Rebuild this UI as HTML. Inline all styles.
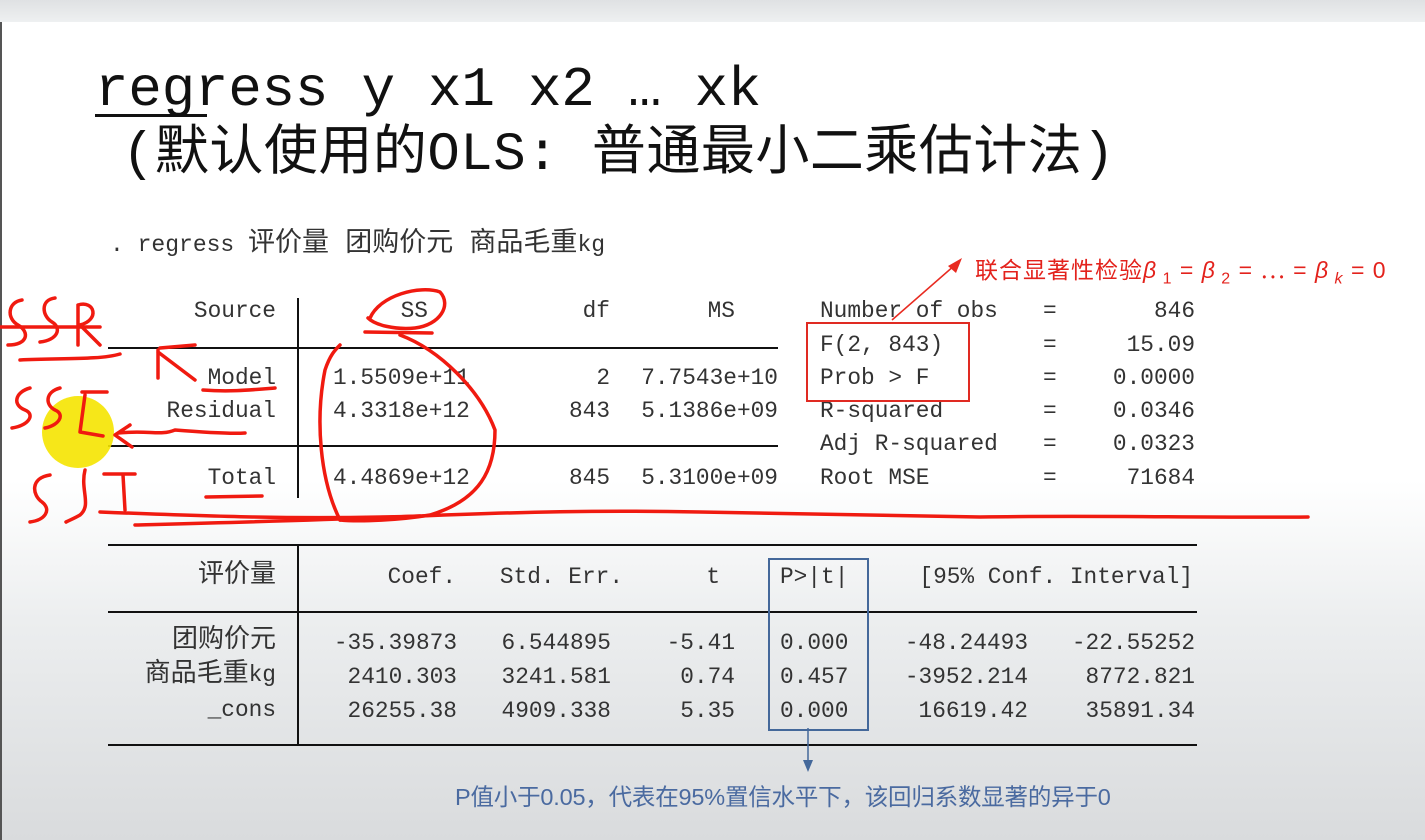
<!DOCTYPE html>
<html><head><meta charset="utf-8"><style>
html,body{margin:0;padding:0}
body{width:1425px;height:840px;position:relative;overflow:hidden;background:linear-gradient(#fff 0px,#fff 480px,#eceeef 620px,#d9dbdd 840px);font-family:"Liberation Mono","Noto Sans CJK SC",monospace;color:#333}
.t{position:absolute;font-size:22.8px;line-height:24px;white-space:pre}
.r{text-align:right}
.l{position:absolute;background:#111}
.m{line-height:34px}
</style></head><body>
<div style="position:absolute;left:0;top:0;width:1425px;height:22px;background:linear-gradient(#dfe1e3,#eef0f1)"></div>
<div style="position:absolute;left:0;top:22px;width:2px;height:818px;background:#555"></div>

<div style="position:absolute;left:95px;top:60px;font-size:56px;line-height:60px;color:#111;white-space:pre;letter-spacing:-0.3px">regress y x1 x2 … xk</div>
<div style="position:absolute;left:95px;top:114px;width:112px;height:3px;background:#111"></div>
<div style="position:absolute;left:122px;top:124px;font-size:54px;line-height:64px;color:#111;white-space:pre;letter-spacing:0.5px">(默认使用的OLS: 普通最小二乘估计法)</div>

<div class="t" style="left:110px;top:233px;font-size:23px">. regress <span style="font-size:27px">评价量 团购价元 商品毛重</span>kg</div>

<!-- upper table -->
<div class="l" style="left:108px;top:347px;width:670px;height:2px"></div>
<div class="l" style="left:108px;top:445px;width:670px;height:2px"></div>
<div class="l" style="left:297px;top:298px;width:2px;height:200px"></div>
<div class="t r" style="right:1149px;top:299px">Source</div>
<div class="t r" style="right:997px;top:299px">SS</div>
<div class="t r" style="right:815px;top:299px">df</div>
<div class="t r" style="right:690px;top:299px">MS</div>
<div class="t r" style="right:1149px;top:366px">Model</div>
<div class="t r" style="right:1149px;top:399px">Residual</div>
<div class="t r" style="right:1149px;top:466px">Total</div>
<div class="t" style="left:333px;top:366px">1.5509e+11</div>
<div class="t" style="left:333px;top:399px">4.3318e+12</div>
<div class="t" style="left:333px;top:466px">4.4869e+12</div>
<div class="t r" style="right:815px;top:366px">2</div>
<div class="t r" style="right:815px;top:399px">843</div>
<div class="t r" style="right:815px;top:466px">845</div>
<div class="t r" style="right:647px;top:366px">7.7543e+10</div>
<div class="t r" style="right:647px;top:399px">5.1386e+09</div>
<div class="t r" style="right:647px;top:466px">5.3100e+09</div>
<div class="t" style="left:820px;top:299px">Number of obs</div>
<div class="t" style="left:820px;top:333px">F(2, 843)</div>
<div class="t" style="left:820px;top:366px">Prob &gt; F</div>
<div class="t" style="left:820px;top:399px">R-squared</div>
<div class="t" style="left:820px;top:432px">Adj R-squared</div>
<div class="t" style="left:820px;top:466px">Root MSE</div>
<div class="t" style="left:1043px;top:299px">=</div>
<div class="t" style="left:1043px;top:333px">=</div>
<div class="t" style="left:1043px;top:366px">=</div>
<div class="t" style="left:1043px;top:399px">=</div>
<div class="t" style="left:1043px;top:432px">=</div>
<div class="t" style="left:1043px;top:466px">=</div>
<div class="t r" style="right:230px;top:299px">846</div>
<div class="t r" style="right:230px;top:333px">15.09</div>
<div class="t r" style="right:230px;top:366px">0.0000</div>
<div class="t r" style="right:230px;top:399px">0.0346</div>
<div class="t r" style="right:230px;top:432px">0.0323</div>
<div class="t r" style="right:230px;top:466px">71684</div>

<!-- lower table -->
<div class="l" style="left:108px;top:544px;width:1089px;height:2px"></div>
<div class="l" style="left:108px;top:611px;width:1089px;height:2px"></div>
<div class="l" style="left:108px;top:744px;width:1089px;height:2px"></div>
<div class="l" style="left:297px;top:545px;width:2px;height:200px"></div>
<div class="t r" style="right:1149px;top:562px;font-size:26px;line-height:26px">评价量</div>
<div class="t r" style="right:969px;top:565px">Coef.</div>
<div class="t r" style="right:802px;top:565px">Std. Err.</div>
<div class="t r" style="right:705px;top:565px">t</div>
<div class="t" style="left:780px;top:565px">P&gt;|t|</div>
<div class="t r" style="right:232px;top:565px">[95% Conf. Interval]</div>
<div class="t r" style="right:1149px;top:627px;font-size:26px;line-height:26px">团购价元</div>
<div class="t r" style="right:1149px;top:661px;font-size:26px;line-height:26px">商品毛重<span style="font-size:22.8px">kg</span></div>
<div class="t r" style="right:1149px;top:698px">_cons</div>
<div class="t r m" style="right:968px;top:626px">-35.39873
2410.303
26255.38</div>
<div class="t r m" style="right:814px;top:626px">6.544895
3241.581
4909.338</div>
<div class="t r m" style="right:690px;top:626px">-5.41
0.74
5.35</div>
<div class="t m" style="left:780px;top:626px">0.000
0.457
0.000</div>
<div class="t r m" style="right:397px;top:626px">-48.24493
-3952.214
16619.42</div>
<div class="t r m" style="right:230px;top:626px">-22.55252
8772.821
35891.34</div>

<div style="position:absolute;left:768px;top:558px;width:97px;height:169px;border:2px solid #44689a"></div>
<div style="position:absolute;left:455px;top:778px;font-family:'Liberation Sans','Noto Sans CJK SC',sans-serif;font-size:23.5px;color:#4a6aa0;white-space:pre;letter-spacing:-0.2px">P值小于0.05，代表在95%置信水平下，该回归系数显著的异于0</div>
<div style="position:absolute;left:975px;top:251px;font-family:'Liberation Sans','Noto Sans CJK SC',sans-serif;font-size:23px;color:#e3221c;white-space:pre;letter-spacing:1px">联合显著性检验<i>β</i><sub style="font-size:16px"> 1</sub> = <i>β</i><sub style="font-size:16px"> 2</sub> = ⋯ = <i>β</i><sub style="font-size:16px"><i> k</i></sub> = 0</div>
<div style="position:absolute;left:806px;top:322px;width:160px;height:76px;border:2px solid #e02a22"></div>

<svg width="1425" height="840" style="position:absolute;left:0;top:0">
<circle cx="78" cy="432" r="36" fill="#f5e400" opacity="0.9"/>
<g fill="none" stroke="#f01a10" stroke-width="3.5" stroke-linecap="round" stroke-linejoin="round">
<path d="M22 300 C8 302 6 318 18 325 C30 332 28 345 8 345"/>
<path d="M55 298 C40 300 42 316 52 322 C62 328 58 340 40 342"/>
<path d="M78 305 L78 345 M78 305 C95 300 100 320 80 325 L100 345"/>
<path d="M0 327 L100 327"/>
<path d="M20 360 C60 358 100 360 120 354"/>
<path d="M160 348 L195 345 M158 350 L158 378 M158 352 L195 380"/>
<path d="M203 390 C230 392 250 390 275 388"/>
<path d="M30 388 C15 392 12 405 25 410 C35 414 30 425 12 428"/>
<path d="M60 388 C45 392 45 405 55 410 C65 414 60 425 45 428"/>
<path d="M82 392 L107 392 M85 395 L80 432 L103 436"/>
<path d="M130 425 L115 435 L132 447 M118 433 C150 430 160 436 175 430 C200 432 230 434 245 433"/>
<path d="M206 497 L262 496"/>
<path d="M50 475 C30 478 32 495 42 502 C52 510 45 520 30 522"/>
<path d="M85 470 C80 490 92 505 80 515 C75 518 70 520 66 522"/>
<path d="M104 474 L135 474 M123 475 L125 510"/>
<path d="M100 512 C200 516 300 520 420 516 C520 512 600 510 700 512 C800 514 900 516 980 517 C1100 515 1200 518 1308 517"/>
<path d="M135 525 C250 522 330 520 420 516"/>
<path d="M370 318 C380 295 420 285 440 292 C452 305 440 325 415 328 C395 330 375 325 368 318"/>
<path d="M365 332 L432 333 M340 520 C320 480 315 420 325 370 C330 355 335 350 340 345"/>
<path d="M400 335 C440 350 480 390 495 430 C495 470 480 500 430 515 C400 520 360 522 340 520"/>
</g>
<line x1="892" y1="320" x2="955" y2="265" stroke="#e82a20" stroke-width="1.5"/>
<polygon points="962,258 948,266 956,273" fill="#e82a20"/>
<line x1="808" y1="728" x2="808" y2="762" stroke="#44689a" stroke-width="1.5"/>
<polygon points="803,760 813,760 808,772" fill="#44689a"/>
</svg>
</body></html>
